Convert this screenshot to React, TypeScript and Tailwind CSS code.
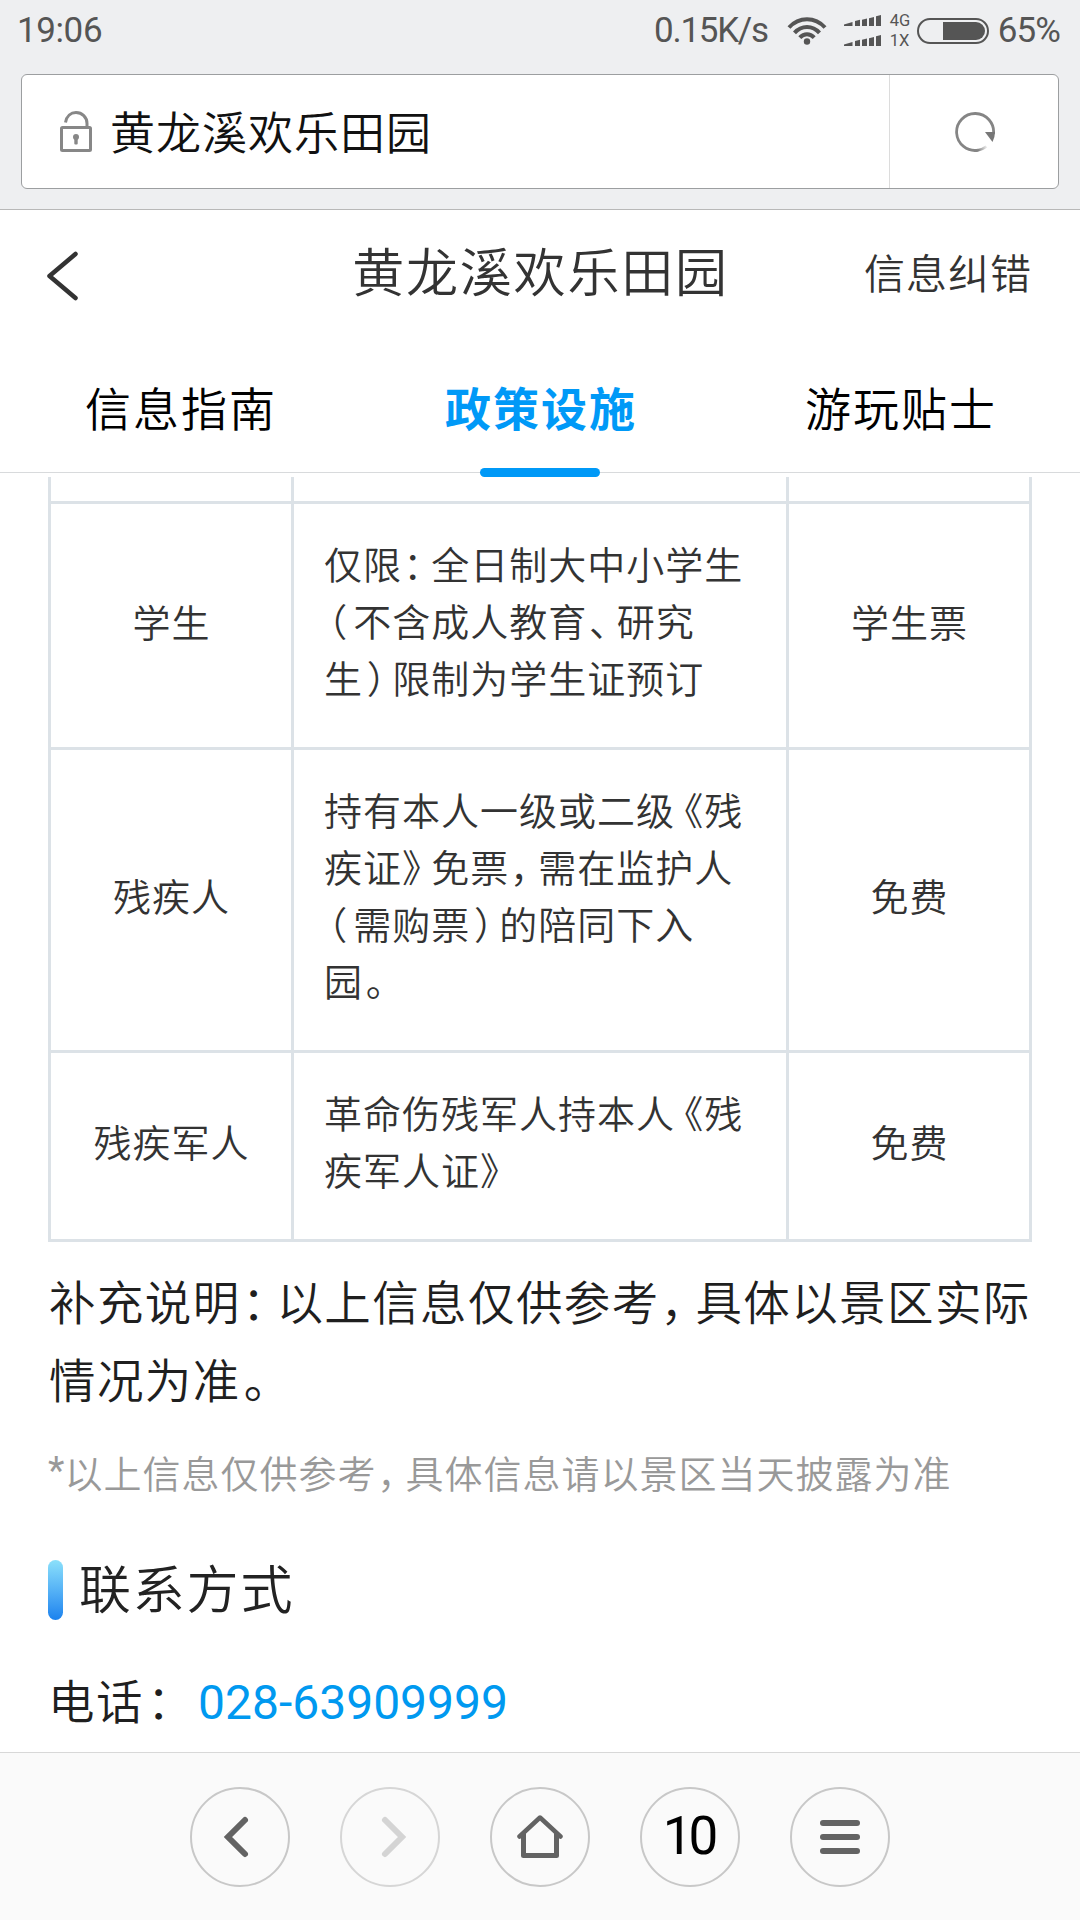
import type { ReactNode } from "react";

// 标点占位比汉字窄：先用 halt 压成半角，再补左右间距
const PUNCTUATION: Record<string, string> = {
  "：": "inline-block pl-[0.03em] pr-[0.21em]",
  "，": "inline-block pl-[0.02em] pr-[0.22em]",
  "、": "inline-block pl-[0.05em] pr-[0.2em]",
  "。": "inline-block pl-[0.07em] pr-[0.2em]",
  "》": "inline-block pr-[0.24em]",
  "《": "inline-block pl-[0.24em]",
  "（": "inline-block pl-[0.11em] pr-[0.13em]",
  "）": "inline-block pl-[0.1em] pr-[0.14em]",
};

function Line({ text }: { text: string }) {
  return (
    <span className="block whitespace-nowrap">
      {text.split(/([：，、。《》（）])/).map((part, i) =>
        PUNCTUATION[part] ? (
          <span key={i} className={`[font-feature-settings:'halt'] ${PUNCTUATION[part]}`}>
            {part}
          </span>
        ) : (
          part
        )
      )}
    </span>
  );
}

const rows = [
  {
    type: "学生",
    height: "h-[246px]",
    lines: [
      "仅限：全日制大中小学生",
      "（不含成人教育、研究",
      "生）限制为学生证预订",
    ],
    policy: "学生票",
  },
  {
    type: "残疾人",
    height: "h-[303px]",
    lines: [
      "持有本人一级或二级《残",
      "疾证》免票，需在监护人",
      "（需购票）的陪同下入",
      "园。",
    ],
    policy: "免费",
  },
  {
    type: "残疾军人",
    height: "h-[189px]",
    lines: ["革命伤残军人持本人《残", "疾军人证》"],
    policy: "免费",
  },
];

function SignalBars() {
  return (
    <svg width="38" height="12" viewBox="0 0 38 12" fill="#555">
      <path d="M0 11V9.5L8.500 7V11ZM11 11V6L16 4.800V11ZM18 11V4.800L23 3.600V11ZM25 11V3.200L30 2V11ZM32 11V1.200L37 0V11Z" />
    </svg>
  );
}

function StatusBar() {
  return (
    <div className="flex h-[61px] items-center justify-between pl-[17px] pr-[20px] font-['Roboto',sans-serif] text-[35px] font-normal leading-none text-[#555]">
      <span className="tracking-[-0.4px]">19:06</span>
      <div className="flex items-center">
        <span className="tracking-[-1.300px]">0.15K/s</span>
        <svg
          className="ml-[19px]"
          width="40"
          height="28"
          viewBox="0 0 40 28"
          fill="none"
          stroke="#555"
          strokeWidth="4"
        >
          <path d="M2 10.500C12 -0.500 28 -0.500 38 10.500" />
          <path d="M7.500 15.800C14.500 8 25.500 8 32.500 15.800" />
          <path d="M12.800 20.600C17 16 23 16 27.200 20.600" />
          <circle cx="20" cy="24.500" r="3.200" fill="#555" stroke="none" />
        </svg>
        <div className="ml-[17px] flex flex-col gap-2">
          <SignalBars />
          <SignalBars />
        </div>
        <div className="ml-[8px] flex w-[22px] flex-col text-[16.500px] leading-[20px]">
          <span>4G</span>
          <span>1X</span>
        </div>
        <div className="ml-[5px] flex h-[26px] w-[72px] items-center justify-end rounded-full border-2 border-[#555] pr-[2px]">
          <div className="h-[18px] w-[42px] rounded-r-full bg-[#555]" />
        </div>
        <span className="ml-[9px] tracking-[-0.900px]">65%</span>
      </div>
    </div>
  );
}

function AddressBar() {
  return (
    <div className="mx-[21px] mt-[13px] flex h-[115px] rounded-[6px] border border-[#9c9ea0] bg-white">
      <div className="flex flex-1 items-center pl-[38px]">
        <svg width="32" height="42" viewBox="0 0 32 42" fill="none">
          <path
            d="M5.500 11.500C6.500 5 11 1.500 16 1.500C22 1.500 27 6 27 12.500V17"
            stroke="#878787"
            strokeWidth="3"
          />
          <rect x="1.500" y="16.500" width="29" height="23" rx="1" stroke="#878787" strokeWidth="3" />
          <circle cx="16" cy="26" r="3" fill="#878787" />
          <rect x="14.300" y="26" width="3.400" height="7.500" rx="1" fill="#878787" />
        </svg>
        <span className="mb-[1px] ml-[18px] text-[45px] leading-[60px] tracking-[1px] text-[#111]">
          黄龙溪欢乐田园
        </span>
      </div>
      <div className="flex w-[169px] items-center justify-center border-l border-[#dcdcdc]">
        <svg width="42" height="42" viewBox="0 0 42 42" fill="none" className="ml-[1px]">
          <defs>
            <linearGradient id="tail" x1="24" y1="38" x2="33" y2="35" gradientUnits="userSpaceOnUse">
              <stop stopColor="#858585" />
              <stop offset="1" stopColor="#858585" stopOpacity="0.1" />
            </linearGradient>
          </defs>
          <path d="M39.500 23A18.500 18.500 0 1 0 24 39.250" stroke="#858585" strokeWidth="2.800" />
          <path d="M23.500 39.300Q28.500 38.500 32.500 35.500" stroke="url(#tail)" strokeWidth="2.800" />
          <path d="M31 21H41Q41 26 38.500 31Z" fill="#777" />
        </svg>
      </div>
    </div>
  );
}

function TabItem({ children, active }: { children: ReactNode; active?: boolean }) {
  return (
    <div
      className={
        active
          ? "flex h-full flex-1 flex-col items-center justify-between font-bold text-[#0099f7]"
          : "flex h-full flex-1 flex-col items-center justify-between text-black"
      }
    >
      <span className="pl-[2px] text-[46px] leading-[60px] tracking-[2px]">{children}</span>
      {active && <span className="h-[9px] w-[120px] rounded-full bg-[#0099f7]" />}
    </div>
  );
}

function NavButton({ children, faded }: { children: ReactNode; faded?: boolean }) {
  return (
    <div
      className={
        faded
          ? "flex size-[100px] items-center justify-center rounded-full border-2 border-[#d6d6d6]"
          : "flex size-[100px] items-center justify-center rounded-full border-2 border-[#c8c8c8]"
      }
    >
      {children}
    </div>
  );
}

export default function App() {
  return (
    <div className="flex h-[1920px] w-[1080px] flex-col overflow-hidden bg-white font-['Noto_Sans_CJK_SC',sans-serif] font-[350]">
      <header className="h-[210px] shrink-0 border-b border-[#b8b8b8] bg-[#eeeff1]">
        <StatusBar />
        <AddressBar />
      </header>

      {/* 页面标题 */}
      <div className="grid h-[118px] shrink-0 grid-cols-[1fr_auto_1fr] items-center pl-[45px] pr-[48px]">
        <svg width="36" height="50" viewBox="0 0 36 50" fill="none" className="mt-[14px]">
          <path d="M30.500 3L4.500 25L30.500 47" stroke="#333" strokeWidth="4.500" strokeLinecap="round" strokeLinejoin="round" />
        </svg>
        <h1 className="mt-[1px] pl-[4px] text-[52px] leading-[60px] tracking-[1.800px] text-[#333]">
          黄龙溪欢乐田园
        </h1>
        <span className="mt-[3px] text-right text-[41px] leading-[60px] tracking-[1px] text-[#333]">
          信息纠错
        </span>
      </div>

      {/* 标签页 */}
      <div className="shrink-0 pt-[48px]">
        <div className="flex h-[97px] border-b border-[#d8dadc]">
          <div className="flex h-[101px] w-full">
            <TabItem>信息指南</TabItem>
            <TabItem active>政策设施</TabItem>
            <TabItem>游玩贴士</TabItem>
          </div>
        </div>
      </div>

      <main className="flex-1 px-[48px] pt-[4px]">
        <div className="border-x-[3px] border-[#dce2e7] text-[38px] leading-[57px] tracking-[1px] text-[#333]">
          <div className="grid h-[27px] grid-cols-[243px_495px_240px] border-b-[3px] border-[#dce2e7]">
            <div className="border-r-[3px] border-[#dce2e7]" />
            <div className="border-r-[3px] border-[#dce2e7]" />
          </div>
          {rows.map((row) => (
            <div
              key={row.type}
              className={`grid grid-cols-[243px_495px_240px] border-b-[3px] border-[#dce2e7] ${row.height}`}
            >
              <div className="flex items-center justify-center border-r-[3px] border-[#dce2e7] pb-[11px] pl-[1px]">
                {row.type}
              </div>
              <div className="flex flex-col justify-center border-r-[3px] border-[#dce2e7] pb-[13px] pl-[30px]">
                {row.lines.map((line) => (
                  <Line key={line} text={line} />
                ))}
              </div>
              <div className="flex items-center justify-center pb-[11px] pl-[1px]">{row.policy}</div>
            </div>
          ))}
        </div>

        <div className="mt-[19px] pl-[1px] text-[46.500px] leading-[78px] tracking-[1.400px] text-[#1f1f1f]">
          <Line text="补充说明：以上信息仅供参考，具体以景区实际" />
          <Line text="情况为准。" />
        </div>
        <div className="mt-[26px] flex text-[38px] leading-[57px] tracking-[1px] text-[#999]">
          <span className="-mr-[1px] font-['Roboto',sans-serif] font-normal">*</span>
          <Line text="以上信息仅供参考，具体信息请以景区当天披露为准" />
        </div>

        {/* 联系方式 */}
        <div className="mt-[60px] flex h-[60px]">
          <div className="w-[15px] rounded-full bg-linear-to-b from-[#8be0fa] to-[#1a82ee]" />
          <h2 className="-mt-[3px] ml-[16px] text-[52px] leading-[60px] tracking-[1.800px] text-[#222]">
            联系方式
          </h2>
        </div>
        <div className="mt-[46px] flex h-[66px] items-center text-[46.500px] leading-[66px] tracking-[1.500px] text-[#1f1f1f]">
          <span>
            电话<span className="pl-[3px]">：</span>
          </span>
          <a className="ml-[3px] mt-[7px] font-['Roboto',sans-serif] text-[48px] font-normal tracking-normal text-[#0099f0]">
            028-63909999
          </a>
        </div>
      </main>

      {/* 底部工具栏 */}
      <nav className="flex h-[168px] shrink-0 justify-center gap-[50px] border-t border-[#d8d8d8] bg-[#fafafa] pt-[34px]">
        <NavButton>
          <svg width="30" height="44" viewBox="0 0 30 44" fill="none" className="mr-[6px]">
            <path d="M23 5L6 22L23 39" stroke="#636363" strokeWidth="6" strokeLinecap="round" />
          </svg>
        </NavButton>
        <NavButton faded>
          <svg width="30" height="44" viewBox="0 0 30 44" fill="none" className="ml-[6px]">
            <path d="M7 5L24 22L7 39" stroke="#d4d4d4" strokeWidth="6" strokeLinecap="round" />
          </svg>
        </NavButton>
        <NavButton>
          <svg width="46" height="44" viewBox="0 0 46 44" fill="none" stroke="#636363" className="mb-[2px]">
            <path d="M2.500 22.500L23 3.500L43.500 22.500" strokeWidth="4.500" strokeLinecap="round" strokeLinejoin="round" />
            <path d="M6.500 19V41.500H39.500V19" strokeWidth="5" strokeLinejoin="round" />
          </svg>
        </NavButton>
        <NavButton>
          <span className="mb-[2px] mr-[3px] font-['Roboto',sans-serif] text-[53px] font-normal leading-none tracking-[-4px] text-black">
            10
          </span>
        </NavButton>
        <NavButton>
          <div className="flex flex-col gap-2">
            <div className="h-[6px] w-[40px] rounded-full bg-[#636363]" />
            <div className="h-[6px] w-[40px] rounded-full bg-[#636363]" />
            <div className="h-[6px] w-[40px] rounded-full bg-[#636363]" />
          </div>
        </NavButton>
      </nav>
    </div>
  );
}
